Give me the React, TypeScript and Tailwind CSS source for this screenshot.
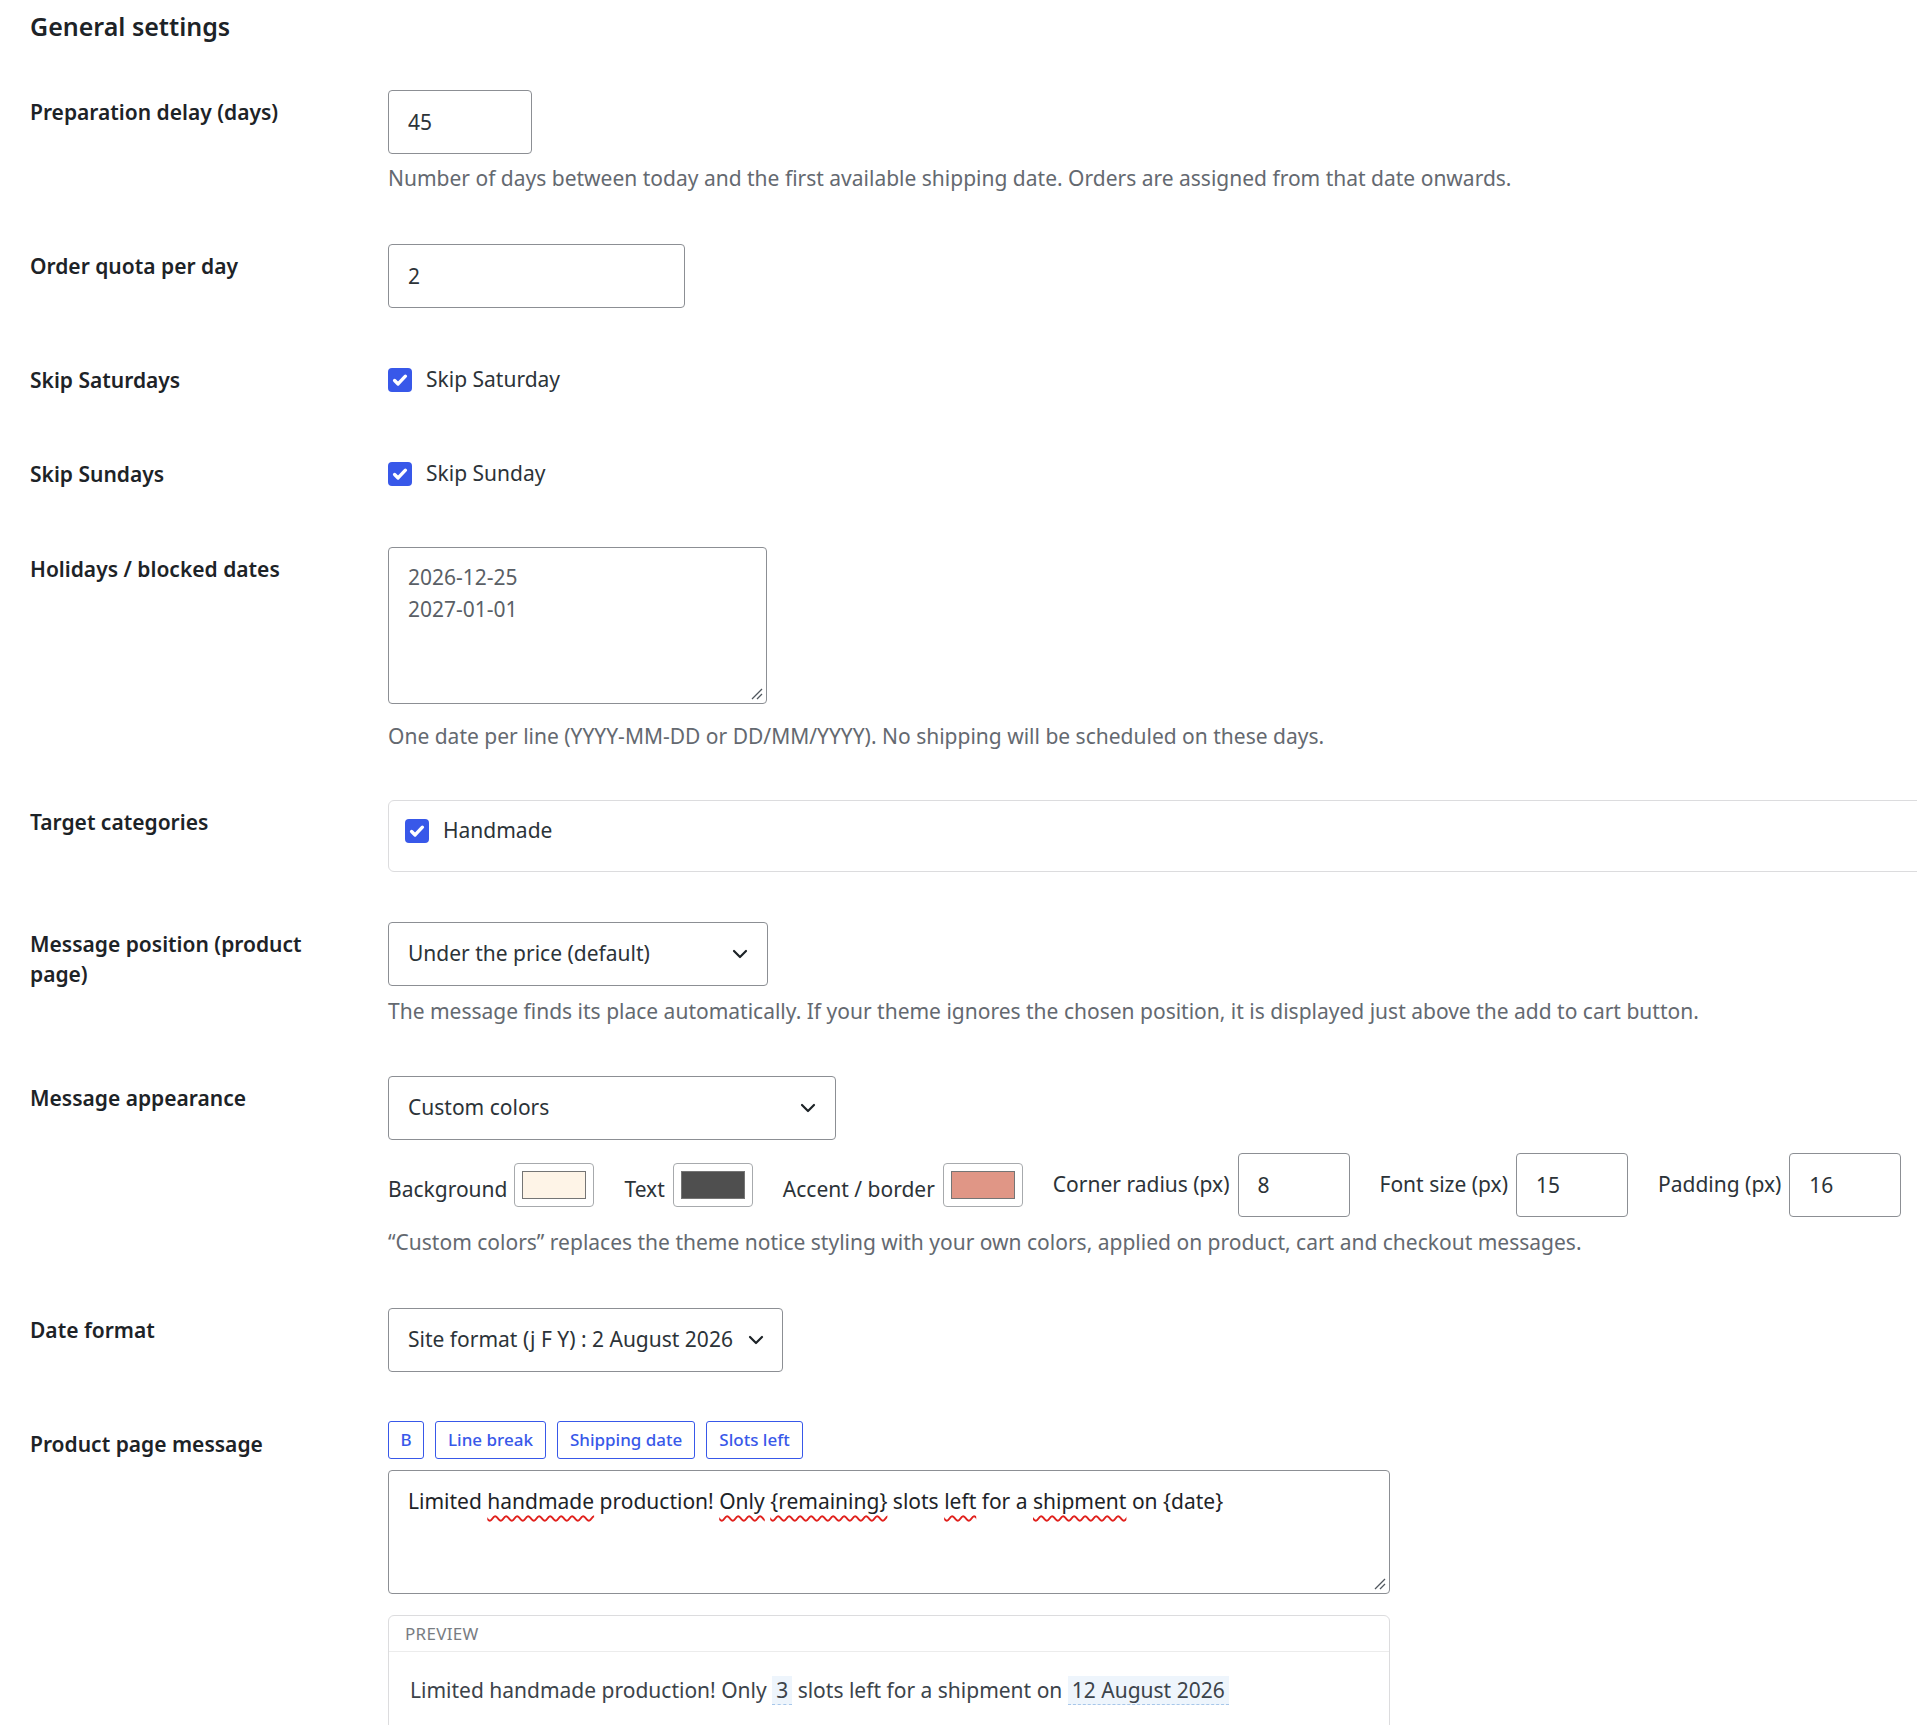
import type { ReactNode } from 'react';

const CheckBox = () => (
  <span className="flex h-[24px] w-[24px] shrink-0 items-center justify-center rounded-[4px] bg-[#3858e9]">
    <svg width="18" height="18" viewBox="0 0 16 16" fill="none">
      <path d="M3.2 8.4l3.1 3.1L12.8 4.6" stroke="#fff" strokeWidth="3" strokeLinecap="round" strokeLinejoin="round" />
    </svg>
  </span>
);

const Chevron = () => (
  <svg width="16" height="10" viewBox="0 0 16 10" fill="none" className="shrink-0">
    <path d="M2 2l6 6 6-6" stroke="#1d2327" strokeWidth="2.2" strokeLinecap="round" strokeLinejoin="round" />
  </svg>
);

// resize grip drawn over the corner of a textarea
const Grip = () => (
  <svg className="absolute bottom-[3px] right-[3px]" width="13" height="13" viewBox="0 0 13 13" fill="none">
    <path d="M12 2L2 12M12 7L7 12" stroke="#50575e" strokeWidth="1.3" />
  </svg>
);

function Row({ label, className, labelClass, children }: { label: ReactNode; className: string; labelClass: string; children: ReactNode }) {
  return (
    <div className={'flex ' + className}>
      <div className={'w-[358px] shrink-0 pr-[50px] text-[21px] font-semibold leading-[30px] text-[#1d2327] ' + labelClass}>{label}</div>
      <div className="min-w-0 flex-1">{children}</div>
    </div>
  );
}

const Desc = ({ className, children }: { className: string; children: ReactNode }) => (
  <p className={'text-[21px] leading-[28px] text-[#646970] whitespace-nowrap ' + className}>{children}</p>
);

const Typo = ({ children }: { children: ReactNode }) => (
  <span className="underline decoration-wavy decoration-[#e0201c] decoration-[1.5px] underline-offset-[6px]">{children}</span>
);

const Token = ({ children }: { children: ReactNode }) => (
  <span className="border-b border-dashed border-[#a7c7ea] bg-[#eef5fc] px-[4px]">{children}</span>
);

const Swatch = ({ color }: { color: string }) => (
  <span className="flex h-[44px] w-[80px] shrink-0 rounded-[4px] border border-[#a7aaad] bg-white p-[7px]">
    <span className="h-full w-full border border-[#757575]" style={{ backgroundColor: color }} />
  </span>
);

const NumInput = ({ value }: { value: string }) => (
  <input
    readOnly
    value={value}
    className="h-[64px] w-[112px] shrink-0 rounded-[4px] border border-[#8c8f94] bg-white pl-[19px] text-[21px] text-[#2c3338] outline-none"
  />
);

export default function App() {
  return (
    <div className="min-h-[1725px] w-[1917px] overflow-hidden bg-white pl-[30px] [font-family:'Noto_Sans',sans-serif]">
      <h2 className="mt-[10px] text-[25px] font-semibold leading-[32px] text-[#1d2327]">General settings</h2>

      <Row label="Preparation delay (days)" className="mt-[48px]" labelClass="pt-[7px]">
        <input
          readOnly
          value="45"
          className="h-[64px] w-[144px] rounded-[4px] border border-[#8c8f94] bg-white pl-[19px] text-[21px] text-[#2c3338] outline-none"
        />
        <Desc className="mt-[10px]">
          Number of days between today and the first available shipping date. Orders are assigned from that date onwards.
        </Desc>
      </Row>

      <Row label="Order quota per day" className="mt-[52px]" labelClass="pt-[7px]">
        <input
          readOnly
          value="2"
          className="h-[64px] w-[297px] rounded-[4px] border border-[#8c8f94] bg-white pl-[19px] text-[21px] text-[#2c3338] outline-none"
        />
      </Row>

      <Row label="Skip Saturdays" className="mt-[57px]" labelClass="">
        <label className="flex h-[30px] items-center gap-[14px] text-[21px] text-[#2c3338]">
          <CheckBox />
          Skip Saturday
        </label>
      </Row>

      <Row label="Skip Sundays" className="mt-[64px]" labelClass="">
        <label className="flex h-[30px] items-center gap-[14px] text-[21px] text-[#2c3338]">
          <CheckBox />
          Skip Sunday
        </label>
      </Row>

      <Row label="Holidays / blocked dates" className="mt-[58px]" labelClass="pt-[7px]">
        <div className="relative h-[157px] w-[379px] rounded-[4px] border border-[#8c8f94] bg-white pl-[19px] pt-[13px] text-[21px] leading-[32px] text-[#5a5f66]">
          <div>2026-12-25</div>
          <div>2027-01-01</div>
          <Grip />
        </div>
        <Desc className="mt-[18px]">One date per line (YYYY-MM-DD or DD/MM/YYYY). No shipping will be scheduled on these days.</Desc>
      </Row>

      <Row label="Target categories" className="mt-[50px]" labelClass="pt-[7px]">
        <div className="h-[72px] w-[1600px] rounded-l-[6px] border border-[#dcdcde] bg-white pl-[16px] pt-[15px]">
          <label className="flex h-[30px] items-center gap-[14px] text-[21px] text-[#2c3338]">
            <CheckBox />
            Handmade
          </label>
        </div>
      </Row>

      <Row label="Message position (product page)" className="mt-[50px]" labelClass="pt-[7px]">
        <div className="flex h-[64px] w-[380px] items-center justify-between rounded-[4px] border border-[#8c8f94] bg-white pl-[19px] pr-[19px] text-[21px] text-[#2c3338]">
          <span>Under the price (default)</span>
          <Chevron />
        </div>
        <Desc className="mt-[11px]">
          The message finds its place automatically. If your theme ignores the chosen position, it is displayed just above the add to cart button.
        </Desc>
      </Row>

      <Row label="Message appearance" className="mt-[51px]" labelClass="pt-[7px]">
        <div className="flex h-[64px] w-[448px] items-center justify-between rounded-[4px] border border-[#8c8f94] bg-white pl-[19px] pr-[19px] text-[21px] text-[#2c3338]">
          <span>Custom colors</span>
          <Chevron />
        </div>
        <div className="mt-[13px] flex h-[64px] items-center gap-[30px] whitespace-nowrap text-[21px] text-[#2c3338]">
          <div className="flex items-center gap-[7px]">
            <span className="mt-[9px]">Background</span>
            <Swatch color="#fef4e7" />
          </div>
          <div className="flex items-center gap-[8px]">
            <span className="mt-[9px]">Text</span>
            <Swatch color="#4f4f4f" />
          </div>
          <div className="flex items-center gap-[8px]">
            <span className="mt-[9px]">Accent / border</span>
            <Swatch color="#e09686" />
          </div>
          <div className="flex items-center gap-[8px]">
            <span>Corner radius (px)</span>
            <NumInput value="8" />
          </div>
          <div className="flex items-center gap-[8px]">
            <span>Font size (px)</span>
            <NumInput value="15" />
          </div>
          <div className="flex items-center gap-[8px]">
            <span>Padding (px)</span>
            <NumInput value="16" />
          </div>
        </div>
        <Desc className="mt-[11px]">
          “Custom colors” replaces the theme notice styling with your own colors, applied on product, cart and checkout messages.
        </Desc>
      </Row>

      <Row label="Date format" className="mt-[52px]" labelClass="pt-[7px]">
        <div className="inline-flex h-[64px] min-w-[395px] items-center justify-between gap-[2px] rounded-[4px] border border-[#8c8f94] bg-white pl-[19px] pr-[18px] text-[21px] text-[#2c3338]">
          <span className="whitespace-nowrap">Site format (j F Y) : 2 August 2026</span>
          <Chevron />
        </div>
      </Row>

      <Row label="Product page message" className="mt-[49px]" labelClass="pt-[8px]">
        <div className="flex gap-[11px] text-[17px] font-medium text-[#3858e9]">
          <span className="flex h-[38px] w-[36px] items-center justify-center rounded-[3px] border border-[#3858e9] bg-white">B</span>
          <span className="flex h-[38px] items-center rounded-[3px] border border-[#3858e9] bg-white px-[12px]">Line break</span>
          <span className="flex h-[38px] items-center rounded-[3px] border border-[#3858e9] bg-white px-[12px]">Shipping date</span>
          <span className="flex h-[38px] items-center rounded-[3px] border border-[#3858e9] bg-white px-[12px]">Slots left</span>
        </div>
        <div className="relative mt-[11px] h-[124px] w-[1002px] rounded-[4px] border border-[#8c8f94] bg-white pl-[19px] pt-[15px] text-[21px] leading-[30px] text-[#1d2327]">
          Limited <Typo>handmade</Typo> production! <Typo>Only</Typo> <Typo>{'{remaining}'}</Typo> slots <Typo>left</Typo> for a{' '}
          <Typo>shipment</Typo> on {'{date}'}
          <Grip />
        </div>
        <div className="mt-[21px] w-[1002px] rounded-[6px] border border-[#dcdcde] bg-white">
          <div className="flex h-[36px] items-center border-b border-[#ececec] pl-[16px] text-[17px] tracking-[0.3px] text-[#787c82]">PREVIEW</div>
          <div className="pb-[30px] pl-[21px] pt-[23px] text-[21px] leading-[30px] text-[#3c434a]">
            Limited handmade production! Only <Token>3</Token> slots left for a shipment on <Token>12 August 2026</Token>
          </div>
        </div>
      </Row>
    </div>
  );
}
